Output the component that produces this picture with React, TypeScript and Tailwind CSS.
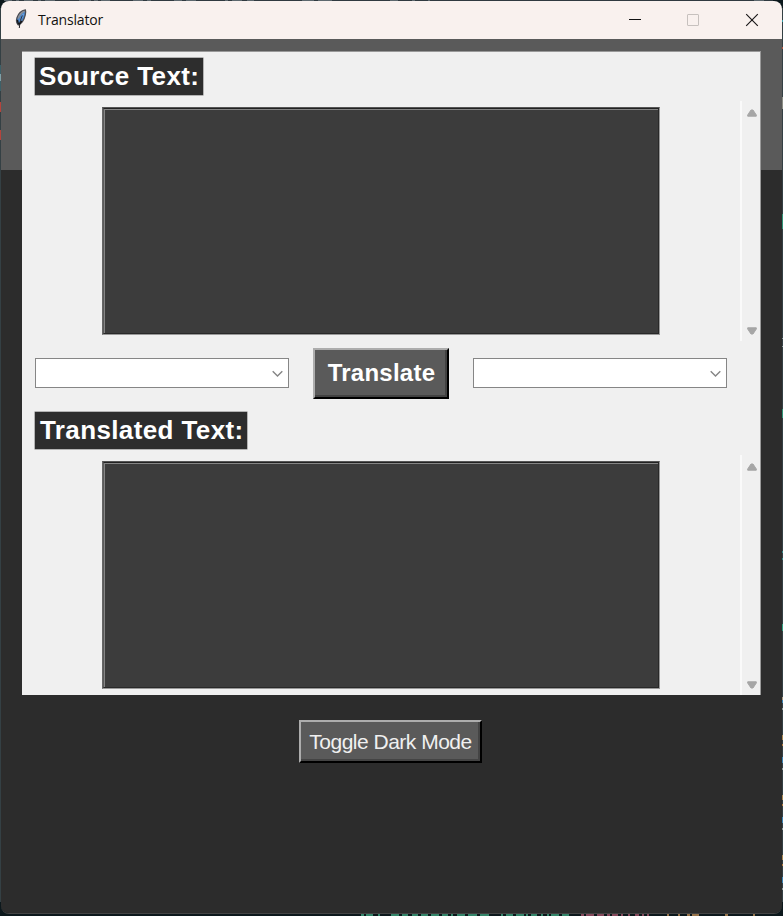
import React from "react";

type Mark = { left: number; top: number; width: number; height: number; color: string };

// Slivers of the editor window that lies behind the translator window.
const marks: Mark[] = [
  { left: 0, top: 65, width: 1, height: 26, color: "#3d6068" },
  { left: 0, top: 74, width: 1, height: 7, color: "#7fa0a8" },
  { left: 0, top: 102, width: 1, height: 10, color: "#b5443c" },
  { left: 0, top: 130, width: 1, height: 10, color: "#b5443c" },
  { left: 782, top: 20, width: 1, height: 2, color: "#36a3b0" },
  { left: 782, top: 47, width: 1, height: 2, color: "#b5533c" },
  { left: 782, top: 97, width: 1, height: 12, color: "#8b8d85" },
  { left: 782, top: 214, width: 1, height: 15, color: "#2f9275" },
  { left: 782, top: 338, width: 1, height: 1, color: "#8a9a9c" },
  { left: 782, top: 346, width: 1, height: 1, color: "#8a9a9c" },
  { left: 782, top: 409, width: 1, height: 9, color: "#2f9275" },
  { left: 782, top: 551, width: 1, height: 2, color: "#34898a" },
  { left: 782, top: 558, width: 1, height: 2, color: "#34898a" },
  { left: 782, top: 624, width: 1, height: 7, color: "#2fa080" },
  { left: 782, top: 697, width: 1, height: 3, color: "#a99a82" },
  { left: 782, top: 700, width: 1, height: 3, color: "#3d86b5" },
  { left: 782, top: 708, width: 1, height: 2, color: "#8a9a9c" },
  { left: 782, top: 735, width: 1, height: 5, color: "#a88752" },
  { left: 782, top: 744, width: 1, height: 2, color: "#b5793c" },
  { left: 782, top: 757, width: 1, height: 6, color: "#3d86b5" },
  { left: 782, top: 768, width: 1, height: 2, color: "#8a9a9c" },
  { left: 782, top: 795, width: 1, height: 5, color: "#a88752" },
  { left: 782, top: 804, width: 1, height: 2, color: "#b5793c" },
  { left: 782, top: 817, width: 1, height: 6, color: "#3d86b5" },
  { left: 782, top: 828, width: 1, height: 2, color: "#8a9a9c" },
  { left: 782, top: 855, width: 1, height: 5, color: "#a88752" },
  { left: 782, top: 864, width: 1, height: 2, color: "#b5793c" },
  { left: 782, top: 877, width: 1, height: 6, color: "#3d86b5" },
  { left: 782, top: 888, width: 1, height: 2, color: "#8a9a9c" },
];

const green = "#34866a";
const rose = "#86495c";
const sand = "#98744b";
const bottomMarks: [number, number, string][] = [
  [361, 3, green], [366, 7, green], [378, 2, green], [391, 8, green], [402, 6, green],
  [412, 6, green], [421, 7, green], [431, 8, green], [442, 6, green], [451, 2, green],
  [457, 8, green], [468, 9, green], [480, 9, green], [501, 2, green], [506, 7, green],
  [516, 8, green], [526, 2, green], [531, 6, green], [541, 2, green], [547, 2, green],
  [551, 8, green], [562, 7, green], [581, 3, rose], [586, 8, rose], [597, 7, rose],
  [607, 3, rose], [612, 6, rose], [621, 2, rose], [628, 2, rose], [635, 4, rose],
  [642, 2, rose], [647, 2, rose], [667, 2, sand], [678, 2, sand], [687, 3, sand],
  [692, 7, sand], [725, 3, sand], [753, 2, sand],
];

const topMarks: [number, number][] = [
  [4, 8], [16, 3], [24, 9], [38, 3], [45, 10], [79, 12], [94, 4], [101, 9], [133, 10],
  [147, 4], [174, 8], [186, 10], [225, 3], [232, 10], [247, 7], [302, 12], [318, 14],
  [390, 8], [412, 3], [428, 2], [754, 10],
];

function Backdrop() {
  return (
    <>
      {marks.map((m, i) => (
        <i key={i} className="absolute" style={{ left: m.left, top: m.top, width: m.width, height: m.height, background: m.color }} />
      ))}
      {bottomMarks.map(([x, w, c]) => (
        <i key={x} className="absolute top-[914px] h-[2px]" style={{ left: x, width: w, background: c }} />
      ))}
      {topMarks.map(([x, w]) => (
        <i key={x} className="absolute top-0 h-px bg-[#5d686e]" style={{ left: x, width: w }} />
      ))}
    </>
  );
}

function Feather() {
  return (
    <svg className="mt-[8px] ml-[13px] h-[20px] w-[14px] shrink-0" viewBox="0 0 14 20">
      <path d="M11.4 1C8 1.8 4.3 4.6 3 8.8 2 12 2.2 14 4.4 16 8 14.4 10.2 10.5 11.2 6.2 11.7 4 12 2.5 11.4 1Z" fill="#4a86ca" stroke="#4c4c52" strokeWidth="1.3" />
      <path d="M10.6 2.2C7.6 3.4 5.2 6 4.3 9.6" fill="none" stroke="#8b8f96" strokeWidth="1.5" />
      <path d="M9.6 4.8C7.8 8 6.6 10 5.9 12.5" fill="none" stroke="#67a0e4" strokeWidth="1.6" />
      <path d="M8.4 6.5C6.8 9.5 5.8 13 5.3 19" fill="none" stroke="#26262b" strokeWidth="1" />
      <path d="M3.4 10.8 4.4 15.4M7.8 12 5.2 15.2" fill="none" stroke="#151517" strokeWidth="1.5" />
    </svg>
  );
}

function TitleBar() {
  return (
    <header className="flex h-[38px] shrink-0 bg-[#f9f1ee]">
      <Feather />
      <span className="mt-[8px] ml-[10px] font-['Open_Sans','Noto_Sans',sans-serif] text-[14px] leading-[22px] tracking-[-0.2px] text-[#111]">
        Translator
      </span>
      <svg className="mt-[10px] mr-[21px] ml-auto h-[18px] w-[135px]" viewBox="0 0 135 18" fill="none">
        <path d="M3 8.5H15" stroke="#111" />
        <rect x="61.5" y="3.5" width="11" height="11" rx="0.5" stroke="#c7c1be" />
        <path d="M120.2 3.2 131.8 14.8M131.8 3.2 120.2 14.8" stroke="#1a1718" strokeWidth="1.15" />
      </svg>
    </header>
  );
}

function Heading({ children, className }: { children: React.ReactNode; className: string }) {
  return (
    <h2 className={`ml-[13px] flex shrink-0 items-center whitespace-nowrap bg-[#2d2d2d] pb-[2px] text-[26px] leading-none font-bold text-white shadow-[0_0_0_0.5px_#777] ${className}`}>
      {children}
    </h2>
  );
}

function TextArea() {
  return (
    <div className="flex h-[240px] shrink-0">
      <div className="mt-[6px] ml-[80px] h-[228px] w-[557.5px] border border-t-[#555] border-r-[#999] border-b-[#999] border-l-[#666]">
        <div className="h-full border border-t-[#222] border-r-[#292929] border-b-[#292929] border-l-[#5b5b5b]">
          <div className="h-full border-t border-l border-[#858585] bg-[#3c3c3c]" />
        </div>
      </div>
      <div className="ml-[80.5px] flex w-[21px] flex-col items-center justify-between border-l-2 border-[#fafafa] pt-[8px] pb-[6px]">
        <svg className="h-[8px] w-[10px]" viewBox="0 0 10 8">
          <path d="M4 1H6L9.3 6V7.2H.7V6Z" fill="#a6a6a6" stroke="#a6a6a6" strokeLinejoin="round" />
        </svg>
        <svg className="h-[8px] w-[10px]" viewBox="0 0 10 8">
          <path d="M.7 .8H9.3V2L6 7H4L.7 2Z" fill="#a6a6a6" stroke="#a6a6a6" strokeLinejoin="round" />
        </svg>
      </div>
    </div>
  );
}

function Combo({ className }: { className: string }) {
  return (
    <div className={`mt-[17px] flex h-[30px] w-[254px] items-center justify-end border border-[#868686] bg-white pr-[5px] ${className}`}>
      <svg className="mt-[2px] h-[8px] w-[11px]" viewBox="0 0 11 8">
        <path d="M.7 1.2 5.5 6 10.3 1.2" fill="none" stroke="#858585" strokeWidth="1.4" />
      </svg>
    </div>
  );
}

export default function App() {
  return (
    <main className="relative h-[916px] w-[783px] overflow-hidden bg-[#0c181c] p-px font-['Liberation_Sans',Arial,sans-serif]">
      <div className="absolute inset-x-0 top-[8px] h-[894px] bg-[#344044]" />
      <div className="absolute inset-x-[10px] top-0 h-px bg-[#303a40]" />
      <Backdrop />
      <div className="relative flex h-[913px] w-[781px] flex-col overflow-hidden rounded-[8px] border-b border-[#444]">
        <TitleBar />
        <div className="flex grow flex-col items-start bg-[linear-gradient(#5a5a5a_131px,#2c2c2c_131px)] pt-[12px] pl-[21px]">
          <section className="flex h-[644px] w-[739px] shrink-0 flex-col items-start overflow-hidden border-t border-r border-[#999] bg-[#f0f0f0]">
            <Heading className="mt-[6px] h-[37px] w-[168px] pl-[4px] tracking-[0.4px]">Source Text:</Heading>
            <div className="h-[6px] shrink-0" />
            <TextArea />
            <div className="flex h-[70px] shrink-0 items-start">
              <Combo className="ml-[13px]" />
              <button className="mt-[7px] ml-[24px] flex h-[51px] w-[136px] items-center justify-center border-2 border-t-[#adadad] border-r-black border-b-black border-l-[#adadad] bg-[#5a5a5a] pb-[1px] pl-px text-[24px] leading-none font-bold tracking-[0.25px] text-white shadow-[inset_-2px_-2px_0_#424242]">
                Translate
              </button>
              <Combo className="ml-[24px]" />
            </div>
            <Heading className="mt-px h-[37px] w-[212px] pl-[5px] tracking-[0.38px]">Translated Text:</Heading>
            <div className="h-[6px] shrink-0" />
            <TextArea />
          </section>
          <button className="mt-[25px] ml-[277px] flex h-[43px] w-[183px] shrink-0 items-center justify-center border-2 border-t-[#adadad] border-r-black border-b-black border-l-[#adadad] bg-[#5a5a5a] pb-px text-[21px] leading-none tracking-[-0.5px] whitespace-nowrap text-[#f0f0f0] shadow-[inset_-2px_-2px_0_#444]">
            Toggle Dark Mode
          </button>
        </div>
      </div>
    </main>
  );
}
